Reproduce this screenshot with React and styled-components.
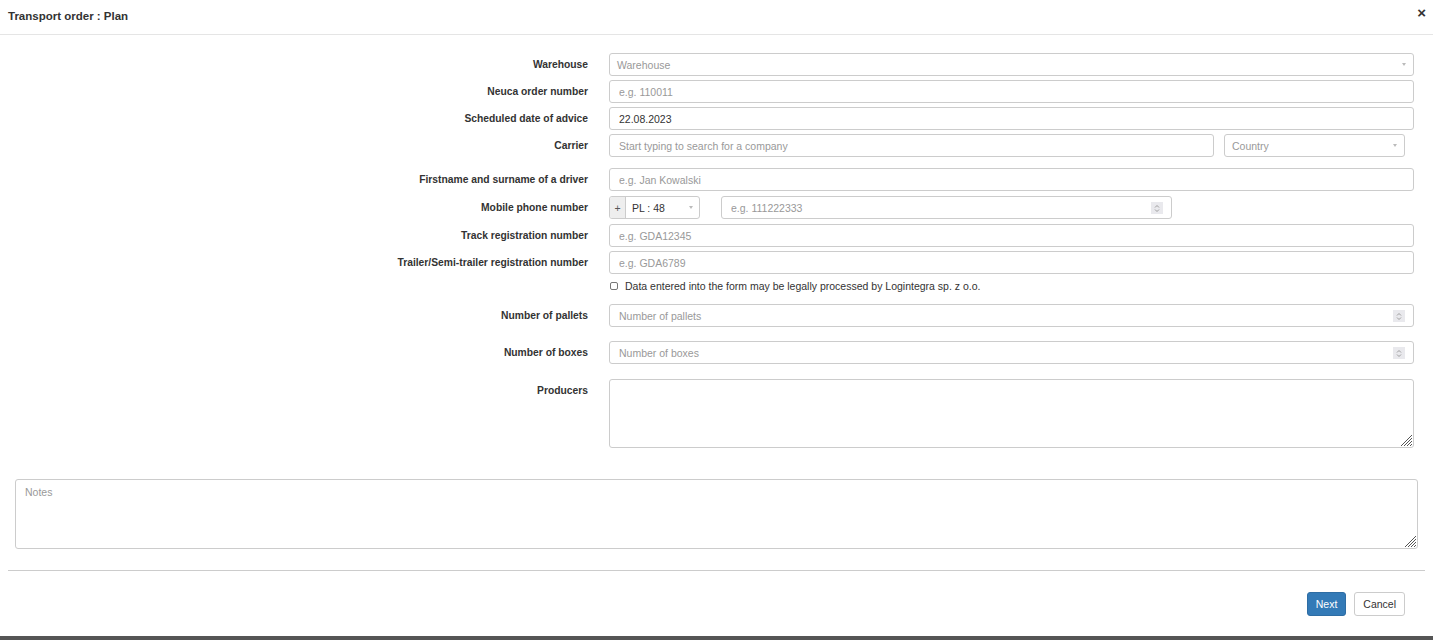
import React from 'react';
import styled, { createGlobalStyle } from 'styled-components';

const GlobalStyle = createGlobalStyle`
  html, body {
    margin: 0;
    padding: 0;
    background: #fff;
    font-family: "Liberation Sans", Arial, sans-serif;
    color: #333;
  }
  * { box-sizing: border-box; }
`;

const Page = styled.div`
  width: 1433px;
  height: 640px;
  display: flex;
  flex-direction: column;
  overflow: hidden;
`;

const Header = styled.div`
  height: 35px;
  border-bottom: 1px solid #e5e5e5;
  display: flex;
  align-items: center;
  justify-content: space-between;
  padding: 0 7px 3px 8px;
`;

const Title = styled.h4`
  margin: 0;
  font-size: 11.5px;
  font-weight: bold;
  color: #333;
`;

const Close = styled.span`
  font-size: 15px;
  font-weight: bold;
  color: #333;
  line-height: 1;
  margin-top: -6px;
`;

const Form = styled.div`
  padding: 18px 19px 0 0;
  display: flex;
  flex-direction: column;
`;

const Row = styled.div`
  display: grid;
  grid-template-columns: 588px 1fr;
  column-gap: 21px;
  align-items: ${p => (p.$top ? 'start' : 'center')};
  margin-bottom: ${p => p.$mb ?? 4}px;
`;

const Label = styled.label`
  text-align: right;
  font-size: 10.3px;
  font-weight: bold;
  color: #333;
  padding-top: ${p => (p.$top ? '6px' : '0')};
`;

const Field = styled.div`
  position: relative;
  display: flex;
  align-items: center;
  gap: ${p => p.$gap ?? 0}px;
`;

const Input = styled.input`
  width: ${p => p.$w || '100%'};
  height: 23px;
  border: 1px solid #ccc;
  border-radius: 3px;
  padding: 0 9px;
  font-family: "Liberation Sans", Arial, sans-serif;
  font-size: 10.5px;
  color: #333;
  background: #fff;
  outline: none;
  &::placeholder { color: #999; }
`;

const SelectBox = styled.div`
  width: ${p => p.$w || '100%'};
  height: 23px;
  border: 1px solid #ccc;
  border-radius: 3px;
  padding: 0 7px;
  display: flex;
  align-items: center;
  justify-content: space-between;
  font-size: 10.5px;
  color: ${p => (p.$value ? '#333' : '#999')};
  background: #fff;
`;

const Caret = styled.span`
  width: 0;
  height: 0;
  border-left: 2px solid transparent;
  border-right: 2px solid transparent;
  border-top: 3px solid #bbb;
`;

const PhoneGroup = styled.div`
  width: 91px;
  height: 23px;
  display: flex;
  border: 1px solid #ccc;
  border-radius: 3px;
  overflow: hidden;
  margin-right: 21px;
  flex-shrink: 0;
`;

const Addon = styled.span`
  width: 16px;
  background: #eee;
  border-right: 1px solid #ccc;
  display: flex;
  align-items: center;
  justify-content: center;
  font-size: 10.5px;
  color: #555;
`;

const PrefixSelect = styled.div`
  flex: 1;
  display: flex;
  align-items: center;
  justify-content: space-between;
  padding: 0 6px;
  font-size: 10.5px;
  color: #333;
`;

const NumberWrap = styled.div`
  position: relative;
  width: ${p => p.$w || '100%'};
  display: flex;
`;

const Spinner = styled.span`
  position: absolute;
  right: 9px;
  top: 6px;
  width: 12px;
  height: 12px;
  background: #e9e9ed;
  display: flex;
  align-items: center;
  justify-content: center;
`;

const CheckRow = styled.div`
  display: flex;
  align-items: center;
  gap: 7px;
  font-size: 10.5px;
  color: #333;
  padding-left: 1px;
`;

const Box = styled.span`
  width: 8px;
  height: 8px;
  border: 1px solid #777;
  border-radius: 2px;
  background: #fff;
`;

const AreaWrap = styled.div`
  position: relative;
`;

const TextArea = styled.textarea`
  width: 100%;
  height: ${p => p.$h || 69}px;
  border: 1px solid #ccc;
  border-radius: 3px;
  padding: 6px 9px;
  font-family: "Liberation Sans", Arial, sans-serif;
  font-size: 10.5px;
  color: #333;
  resize: none;
  outline: none;
  display: block;
  &::placeholder { color: #999; }
`;

const Grip = styled.svg`
  position: absolute;
  right: 2px;
  bottom: 2px;
  pointer-events: none;
`;

const NotesWrap = styled.div`
  padding: 31px 15px 0 15px;
`;

const Divider = styled.hr`
  margin: 21px 8px 0 8px;
  border: 0;
  border-top: 1px solid #ccc;
`;

const Footer = styled.div`
  display: flex;
  justify-content: flex-end;
  gap: 8px;
  padding: 21px 28px 0 0;
`;

const Button = styled.button`
  height: 24px;
  padding: 0 8px;
  border-radius: 3px;
  font-family: "Liberation Sans", Arial, sans-serif;
  font-size: 10.5px;
  cursor: pointer;
  border: 1px solid ${p => (p.$primary ? '#2e6da4' : '#ccc')};
  background: ${p => (p.$primary ? '#337ab7' : '#fff')};
  color: ${p => (p.$primary ? '#fff' : '#333')};
`;

const BottomBar = styled.div`
  margin-top: auto;
  height: 4px;
  background: #555;
`;

const SpinIcon = () => (
  <svg width="6" height="9" viewBox="0 0 6 9">
    <path d="M1 3.5 L3 1.5 L5 3.5 M1 5.5 L3 7.5 L5 5.5" fill="none" stroke="#888" strokeWidth="0.8" />
  </svg>
);

const Area = ({ h, placeholder }) => (
  <AreaWrap>
    <TextArea $h={h} placeholder={placeholder} />
    <Grip width="12" height="12" viewBox="0 0 12 12">
      <path d="M1 12 L12 1 M4 12 L12 4 M7 12 L12 7 M10 12 L12 10" stroke="#555" strokeWidth="1" />
    </Grip>
  </AreaWrap>
);

const TextRow = ({ label, placeholder, value, mb }) => (
  <Row $mb={mb}>
    <Label>{label}</Label>
    <Input placeholder={placeholder} defaultValue={value} />
  </Row>
);

const NumberRow = ({ label, placeholder, mb }) => (
  <Row $mb={mb}>
    <Label>{label}</Label>
    <NumberWrap>
      <Input placeholder={placeholder} />
      <Spinner><SpinIcon /></Spinner>
    </NumberWrap>
  </Row>
);

export default function App() {
  return (
    <Page>
      <GlobalStyle />
      <Header>
        <Title>Transport order : Plan</Title>
        <Close>×</Close>
      </Header>

      <Form>
        <Row>
          <Label>Warehouse</Label>
          <SelectBox>Warehouse<Caret /></SelectBox>
        </Row>
        <TextRow label="Neuca order number" placeholder="e.g. 110011" />
        <TextRow label="Scheduled date of advice" value="22.08.2023" />
        <Row $mb={11}>
          <Label>Carrier</Label>
          <Field $gap={10}>
            <Input $w="605px" placeholder="Start typing to search for a company" />
            <SelectBox $w="181px">Country<Caret /></SelectBox>
          </Field>
        </Row>
        <TextRow label="Firstname and surname of a driver" placeholder="e.g. Jan Kowalski" mb={5} />
        <Row $mb={5}>
          <Label>Mobile phone number</Label>
          <Field>
            <PhoneGroup>
              <Addon>+</Addon>
              <PrefixSelect>PL : 48<Caret /></PrefixSelect>
            </PhoneGroup>
            <NumberWrap $w="451px">
              <Input placeholder="e.g. 111222333" />
              <Spinner><SpinIcon /></Spinner>
            </NumberWrap>
          </Field>
        </Row>
        <TextRow label="Track registration number" placeholder="e.g. GDA12345" mb={4} />
        <TextRow label="Trailer/Semi-trailer registration number" placeholder="e.g. GDA6789" mb={6} />
        <Row $mb={12}>
          <span />
          <CheckRow>
            <Box />
            Data entered into the form may be legally processed by Logintegra sp. z o.o.
          </CheckRow>
        </Row>
        <NumberRow label="Number of pallets" placeholder="Number of pallets" mb={14} />
        <NumberRow label="Number of boxes" placeholder="Number of boxes" mb={15} />
        <Row $top $mb={0}>
          <Label $top>Producers</Label>
          <Area h={69} />
        </Row>
      </Form>

      <NotesWrap>
        <Area h={70} placeholder="Notes" />
      </NotesWrap>

      <Divider />

      <Footer>
        <Button $primary>Next</Button>
        <Button>Cancel</Button>
      </Footer>

      <BottomBar />
    </Page>
  );
}
